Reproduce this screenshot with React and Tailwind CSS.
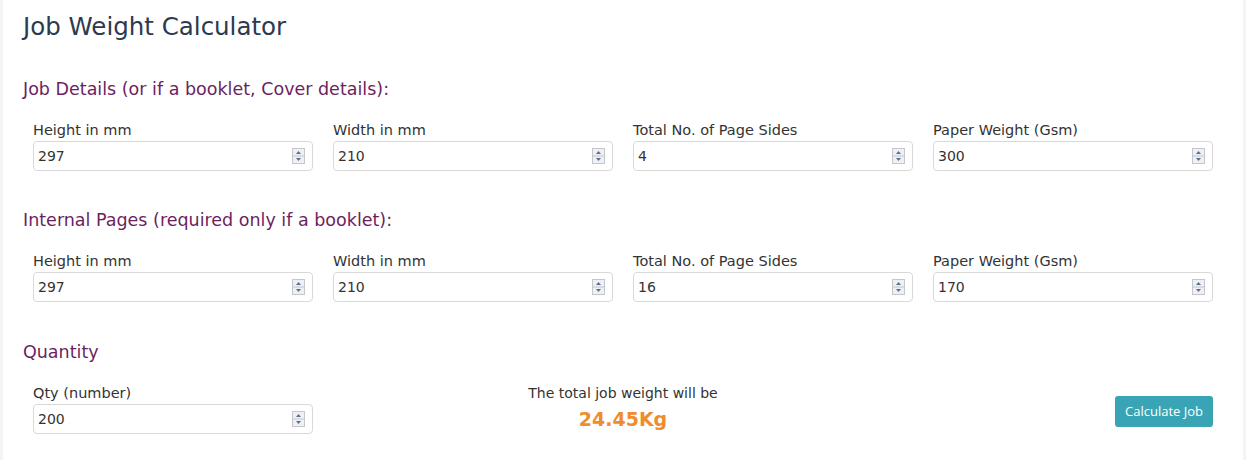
import React from 'react';

const font = { fontFamily: '"DejaVu Sans", "Liberation Sans", sans-serif' };

const Spinner = () => (
  <svg width="13" height="16" viewBox="0 0 13 16" className="absolute right-[7px] top-[6px]">
    <rect x="0.5" y="0.5" width="12" height="15" fill="#eef0f4" stroke="#c3c6cc" />
    <line x1="1" y1="8" x2="12" y2="8" stroke="#c3c6cc" />
    <path d="M4 6 L6.5 3 L9 6 Z" fill="#5b6f8c" />
    <path d="M4 10 L6.5 13 L9 10 Z" fill="#5b6f8c" />
  </svg>
);

const Field = ({ label, value }) => (
  <div className="w-[300px] px-[10px]">
    <div className="text-[14.5px] leading-[20px] text-[#333] h-[21px]">{label}</div>
    <div className="relative h-[30px] border border-[#d9d9d9] rounded-[4px] bg-white">
      <div className="text-[14px] leading-[28px] text-[#333] pl-[4px]">{value}</div>
      <Spinner />
    </div>
  </div>
);

const Section = ({ title, values }) => (
  <>
    <h2 className="text-[17.5px] leading-[26px] text-[#6b1f5f] h-[26px]">{title}</h2>
    <div className="flex mt-[18px]">
      <Field label="Height in mm" value={values[0]} />
      <Field label="Width in mm" value={values[1]} />
      <Field label="Total No. of Page Sides" value={values[2]} />
      <Field label="Paper Weight (Gsm)" value={values[3]} />
    </div>
  </>
);

export default function App() {
  return (
    <div className="bg-[#f4f4f4] px-[3px] h-[460px] overflow-hidden" style={font}>
      <div className="bg-white h-[460px] pl-[20px]">
        <div className="w-[1200px] pt-[10px]">
          <h1 className="text-[24.5px] leading-[34px] text-[#2c3a4f] h-[34px]">Job Weight Calculator</h1>
          <div className="mt-[32px]">
            <Section title="Job Details (or if a booklet, Cover details):" values={['297', '210', '4', '300']} />
          </div>
          <div className="mt-[36px]">
            <Section title="Internal Pages (required only if a booklet):" values={['297', '210', '16', '170']} />
          </div>
          <div className="mt-[37px]">
            <h2 className="text-[17.5px] leading-[26px] text-[#6b1f5f] h-[26px]">Quantity</h2>
            <div className="flex mt-[18px]">
              <Field label="Qty (number)" value="200" />
              <div className="w-[600px] text-center">
                <div className="text-[14px] leading-[20px] text-[#333]">The total job weight will be</div>
                <div className="text-[19px] leading-[30px] font-bold text-[#f08c2e] mt-[1px]">24.45Kg</div>
              </div>
              <div className="w-[300px] px-[10px] flex justify-end pt-[13px]">
                <button className="h-[31px] px-[10px] rounded-[3px] bg-[#38a4b5] text-white text-[13px]" style={{ fontFamily: '"Open Sans", sans-serif' }}>Calculate Job</button>
              </div>
            </div>
          </div>
        </div>
      </div>
    </div>
  );
}
